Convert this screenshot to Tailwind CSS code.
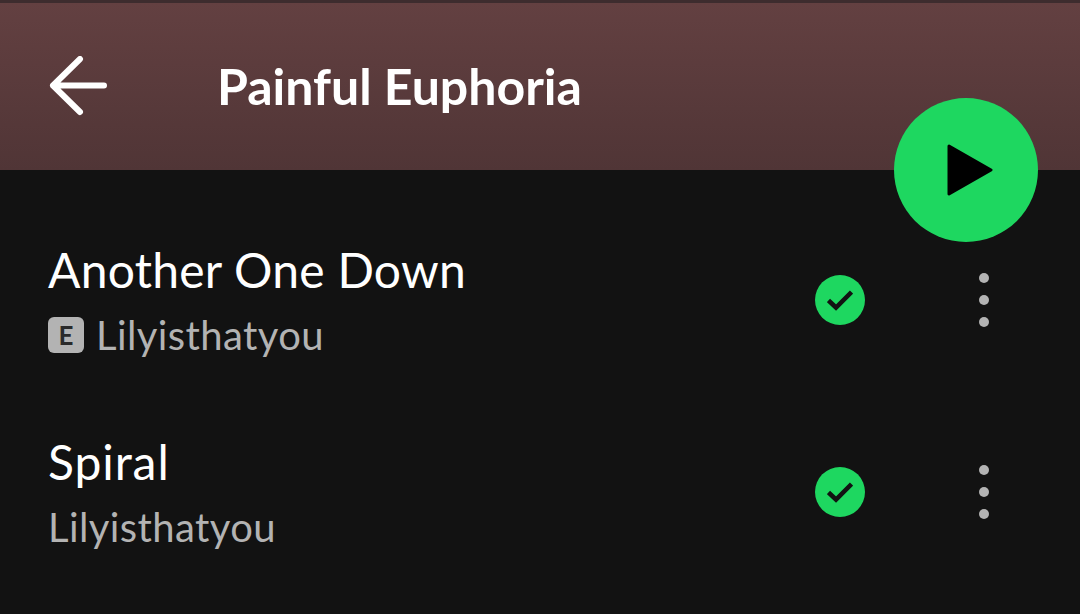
<!DOCTYPE html>
<html lang="en">
<head>
  <meta charset="UTF-8">
  <title>Painful Euphoria</title>
  <script src="https://cdn.jsdelivr.net/npm/@tailwindcss/browser@4"></script>
</head>
<body class="relative w-[1080px] h-[614px] overflow-hidden bg-[#121212] font-['Lato',sans-serif]">
  <!-- Header -->
  <header class="h-[170px] border-t-[3px] border-[#3d2c2e] bg-gradient-to-b from-[#634041] to-[#503536] flex items-center pb-[2px]">
    <svg class="ml-[48px] w-[60px] h-[60px]" viewBox="0 0 60 60" fill="none" stroke="#fff" stroke-width="6" stroke-linecap="round" stroke-linejoin="round">
      <path d="M5 29.5H56M32 3L5 29.5L32 56"/>
    </svg>
    <h1 class="ml-[109px] text-[50px] leading-none font-bold text-white">Painful Euphoria</h1>
  </header>

  <!-- Play button -->
  <button class="absolute left-[894px] top-[98px] w-[144px] h-[144px] rounded-full bg-[#1ed760] flex items-center justify-center">
    <svg class="w-[46px] h-[52px] ml-[8px]" viewBox="0 0 46 52"><path d="M2 2L44 26L2 50Z" fill="#000" stroke="#000" stroke-width="3" stroke-linejoin="round"/></svg>
  </button>

  <!-- Tracks -->
  <ul class="pt-[35px]">
    <li class="h-[192px] flex items-center pl-[48px] pr-[91px] pb-[2px]">
      <div class="flex-1 -mt-[3px]">
        <p class="text-[48px] leading-[64px] tracking-[0.25px] text-white">Another One Down</p>
        <div class="flex items-center gap-[12px] mt-[8px]">
          <span class="w-[36px] h-[36px] rounded-[6px] bg-[#b3b3b3] flex items-center justify-center text-[26px] font-bold leading-none text-[#2a2a2a]">E</span>
          <span class="text-[40px] leading-[50px] tracking-[0.4px] text-[#b3b3b3]">Lilyisthatyou</span>
        </div>
      </div>
      <div class="w-[50px] h-[50px] rounded-full bg-[#1ed760] flex items-center justify-center">
        <svg class="w-[26px] h-[22px]" viewBox="0 0 26 22" fill="none" stroke="#121212" stroke-width="4.5"><path d="M1.5 11.5L9 18.5L24.5 3"/></svg>
      </div>
      <div class="ml-[114px] flex flex-col gap-[12px]">
        <span class="w-[10px] h-[10px] rounded-full bg-[#b3b3b3]"></span>
        <span class="w-[10px] h-[10px] rounded-full bg-[#b3b3b3]"></span>
        <span class="w-[10px] h-[10px] rounded-full bg-[#b3b3b3]"></span>
      </div>
    </li>
    <li class="h-[192px] flex items-center pl-[48px] pr-[91px] pb-[2px]">
      <div class="flex-1 -mt-[3px]">
        <p class="text-[48px] leading-[64px] tracking-[0.9px] text-white">Spiral</p>
        <p class="text-[40px] leading-[50px] tracking-[0.4px] mt-[8px] text-[#b3b3b3]">Lilyisthatyou</p>
      </div>
      <div class="w-[50px] h-[50px] rounded-full bg-[#1ed760] flex items-center justify-center">
        <svg class="w-[26px] h-[22px]" viewBox="0 0 26 22" fill="none" stroke="#121212" stroke-width="4.5"><path d="M1.5 11.5L9 18.5L24.5 3"/></svg>
      </div>
      <div class="ml-[114px] flex flex-col gap-[12px]">
        <span class="w-[10px] h-[10px] rounded-full bg-[#b3b3b3]"></span>
        <span class="w-[10px] h-[10px] rounded-full bg-[#b3b3b3]"></span>
        <span class="w-[10px] h-[10px] rounded-full bg-[#b3b3b3]"></span>
      </div>
    </li>
  </ul>
</body>
</html>
